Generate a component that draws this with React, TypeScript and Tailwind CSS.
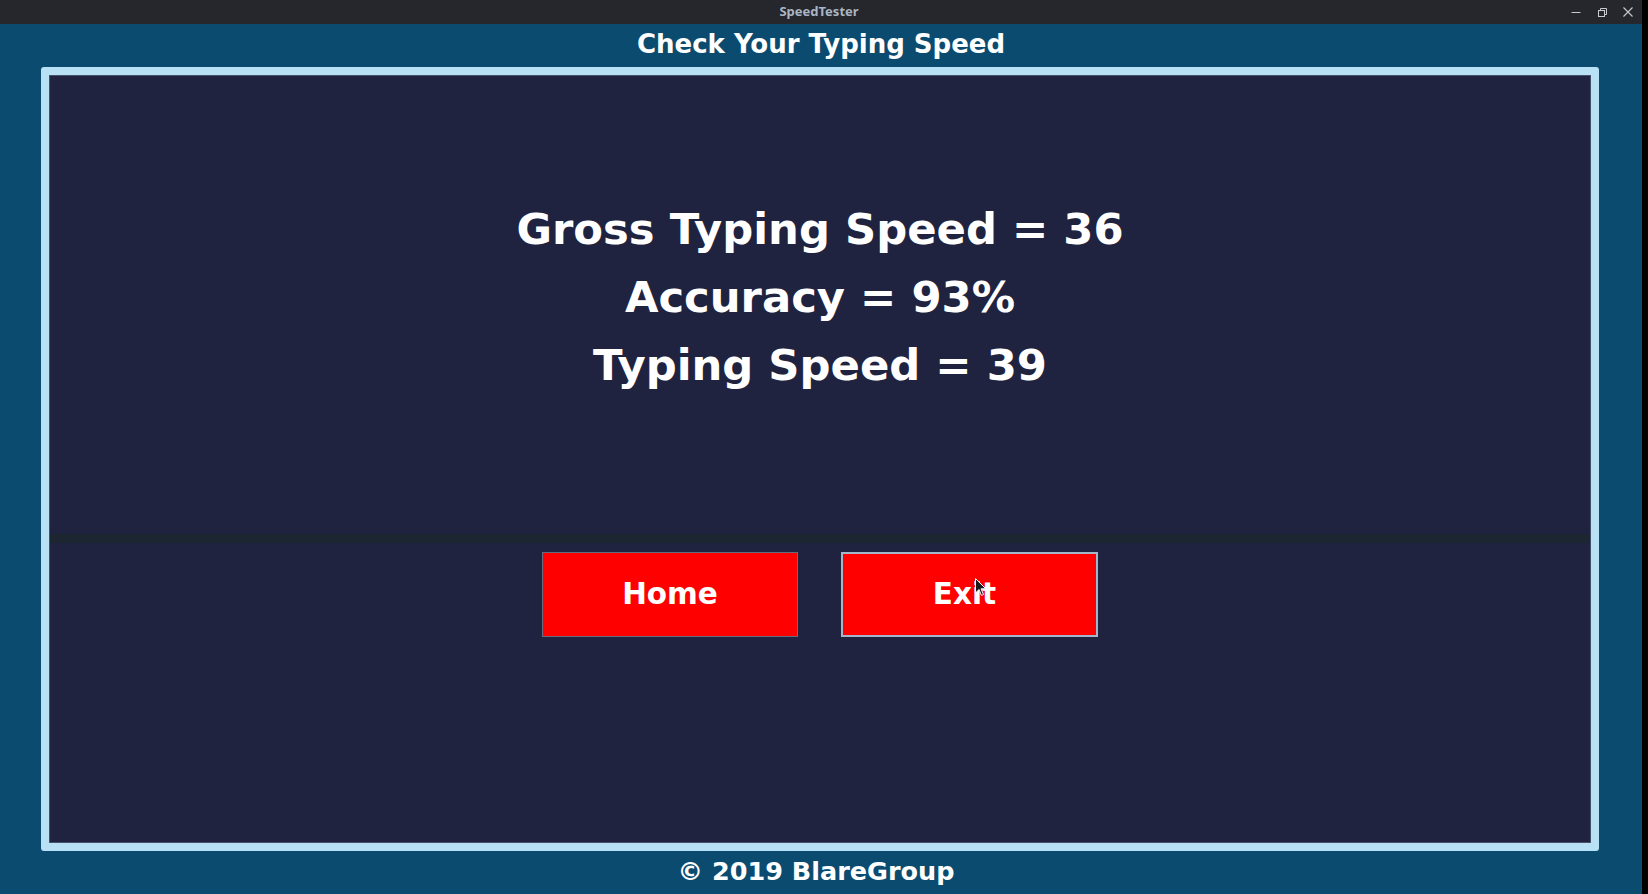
import React from "react";

const dv = { fontFamily: '"DejaVu Sans", Verdana, sans-serif' };

export default function App() {
  return (
    <div className="w-[1648px] h-[894px] flex overflow-hidden bg-black">
      <div className="w-[1642px] h-full flex flex-col bg-[#0b4b70]">
        {/* Title bar */}
        <div className="h-[24px] bg-[#25272d] flex items-center">
          <div className="flex-1" />
          <div
            className="text-[13px] font-bold text-[#aab5c3] leading-none pb-[2px] pl-[4px]"
            style={{ fontFamily: '"Noto Sans", sans-serif' }}
          >
            SpeedTester
          </div>
          <div className="flex-1 flex justify-end items-center gap-[14px] pr-[8px]">
            <svg width="12" height="12" viewBox="0 0 12 12">
              <line x1="1.5" y1="6.5" x2="10.5" y2="6.5" stroke="#c9cbd0" strokeWidth="1" />
            </svg>
            <svg width="12" height="12" viewBox="0 0 12 12">
              <rect x="2.5" y="4.5" width="6" height="6" fill="none" stroke="#c9cbd0" strokeWidth="1" />
              <path d="M4.5 4.5 V2.5 H10.5 V8.5 H8.5" fill="none" stroke="#c9cbd0" strokeWidth="1" />
            </svg>
            <svg width="12" height="12" viewBox="0 0 12 12">
              <path d="M1.5 1.5 L10.5 10.5 M10.5 1.5 L1.5 10.5" stroke="#c9cbd0" strokeWidth="1.1" />
            </svg>
          </div>
        </div>

        {/* Heading */}
        <div className="h-[43px] flex items-center justify-center">
          <div className="text-white font-bold text-[26px] leading-none pb-[3px]" style={dv}>
            Check Your Typing Speed
          </div>
        </div>

        {/* Panel */}
        <div className="ml-[41px] w-[1558px] h-[784px] border-[8px] border-[#b9e1f6] rounded-[3px] bg-[#b9e1f6]">
          <div className="w-full h-full bg-[#1f2340] border border-[#47526a] flex flex-col">
            <div
              className="h-[458px] flex flex-col items-center pt-[119px] text-white font-bold text-[43.3px] leading-[68px]"
              style={dv}
            >
              <div>Gross Typing Speed = 36</div>
              <div>Accuracy = 93%</div>
              <div>Typing Speed = 39</div>
            </div>
            <div className="h-[9px] bg-[#1b2630]" />
            <div className="flex justify-center gap-[43px] pt-[9px]">
              <button
                className="w-[256px] h-[85px] bg-[#ff0000] border border-[#666c80] text-white font-bold text-[29.5px] flex items-center justify-center"
                style={dv}
              >
                Home
              </button>
              <button
                className="relative w-[257px] h-[85px] bg-[#ff0000] border-2 border-[#a3b6ca] text-white font-bold text-[29.5px] flex items-center justify-center pr-[10px]"
                style={dv}
              >
                Exit
                <svg
                  className="absolute left-[132px] top-[24px]"
                  width="12"
                  height="19"
                  viewBox="0 0 12 19"
                >
                  <path
                    d="M0.5 0.5 L0.5 15 L4 11.5 L6.5 17.5 L8.5 16.5 L6 10.8 L10.8 10.8 Z"
                    fill="#1a1a1a"
                    stroke="#ffffff"
                    strokeWidth="1"
                  />
                </svg>
              </button>
            </div>
          </div>
        </div>

        {/* Footer */}
        <div className="flex-1 flex items-center justify-center">
          <div className="text-white font-bold text-[25.5px] leading-none pb-[2px] pr-[10px]" style={dv}>
            © 2019 BlareGroup
          </div>
        </div>
      </div>
      <div className="w-[6px] h-full bg-black" />
    </div>
  );
}
